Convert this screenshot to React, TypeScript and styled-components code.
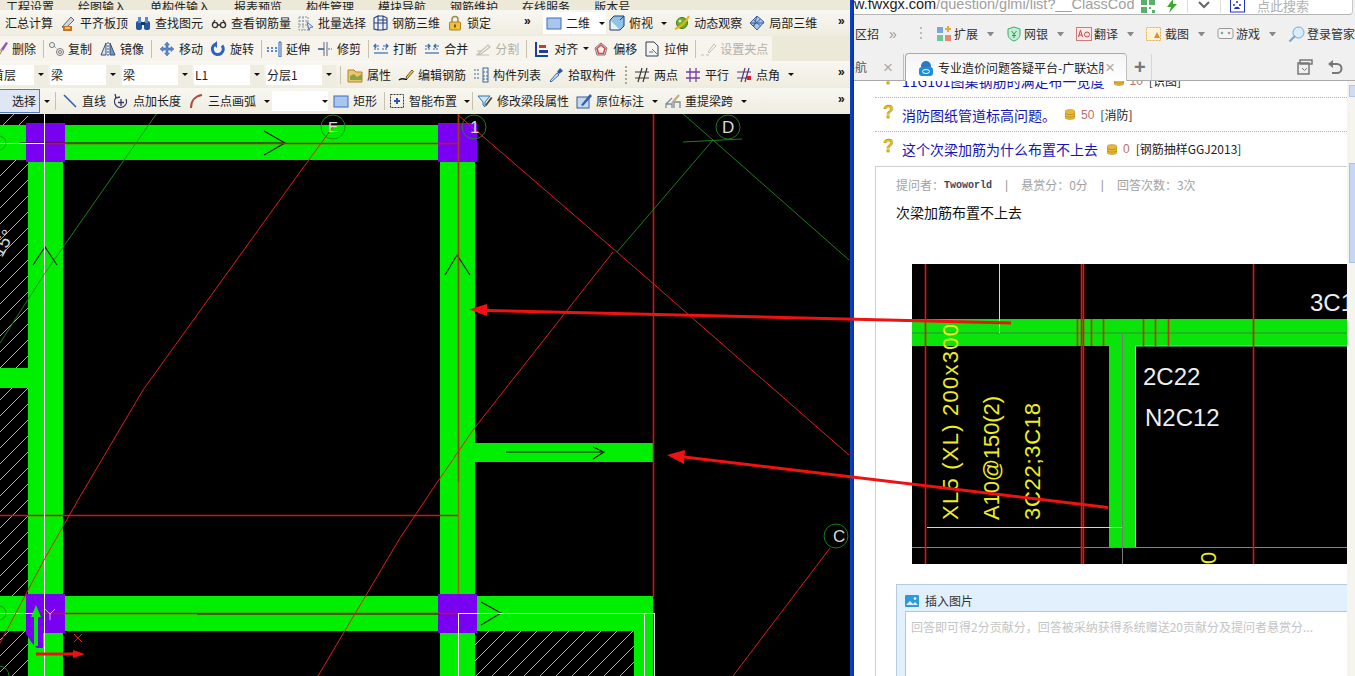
import React from "react";
import styled, { createGlobalStyle } from "styled-components";

const Global = createGlobalStyle`
  html, body { margin: 0; padding: 0; background: #000; overflow: hidden; }
  * { box-sizing: border-box; }
`;
const CJK = `"Noto Sans CJK SC", "Liberation Sans", sans-serif`;

const Page = styled.div`
  position: relative; display: flex; width: 1355px; height: 676px; overflow: hidden;
  font-family: ${CJK}; font-size: 12px; line-height: 1; background: #fff;
`;
const CadApp = styled.div`
  width: 850px; flex: none; display: flex; flex-direction: column; background: #000;
`;
const Rule = styled.div`
  width: 4px; flex: none; background: linear-gradient(to right, #0b46c8, #0a2fa8);
`;
const MenuSliver = styled.div`
  height: 10px; flex: none; display: flex; align-items: flex-end; gap: 24px; overflow: hidden;
  padding-left: 6px; background: #ece9d8; color: #222; white-space: nowrap;
  span { display: block; margin-bottom: -3px; }
`;
const ToolRow = styled.div<{ $h: number; $band?: number }>`
  height: ${p => p.$h}px; flex: none; display: flex; align-items: center; gap: 7px; overflow: hidden;
  background: ${p => p.$band
    ? `linear-gradient(to right, #f6f4ec ${p.$band}px, #ece9d8 ${p.$band}px)`
    : "linear-gradient(#f8f7f1, #efecdf)"};
  white-space: nowrap; color: #1c1c1c;
`;
const ToolItem = styled.div<{ $ml?: number; $muted?: boolean }>`
  display: flex; align-items: center; gap: 4px; flex: none;
  margin-left: ${p => p.$ml ?? 0}px;
  color: ${p => (p.$muted ? "#b3b1a6" : "#1c1c1c")};
  svg { flex: none; }
`;
const Caret = styled.i<{ $ml?: number }>`
  display: block; flex: none; width: 6px; height: 3px; margin: 0 .5px 0 ${p => (p.$ml ?? 0) + 0.5}px;
  border-left: 3px solid transparent; border-right: 3px solid transparent; border-top: 3px solid #111;
`;
const Sep = styled.i<{ $ml?: number }>`
  display: block; flex: none; width: 1px; height: 18px; background: #c5c2b0;
  margin: 0 -3px 0 ${p => p.$ml ?? 0}px;
`;
const More = styled.b<{ $ml?: string }>`
  margin-left: ${p => p.$ml ?? "auto"}; margin-right: ${p => (p.$ml ? 0 : 3)}px; align-self: flex-start; margin-top: 4px;
  font: bold 12px "Liberation Sans", sans-serif; letter-spacing: -1px; color: #111; width: 9px;
`;
const Grip = styled.i<{ $ml?: number }>`
  display: block; flex: none; width: 2px; height: 18px; margin-left: ${p => p.$ml ?? 0}px;
  background: repeating-linear-gradient(#a9a692 0 2px, transparent 2px 4px);
`;
const ViewGroup = styled.div`
  display: flex; align-items: center; gap: 4px; flex: none; width: 63px; height: 22px;
  margin-left: 3px; padding-left: 3px; background: #fff;
`;
const Combo = styled.div<{ $w: number; $ml?: number; $offset?: number }>`
  display: flex; align-items: center; flex: none; height: 20px; width: ${p => p.$w}px;
  margin-left: ${p => p.$ml ?? -5}px; background: #fff; overflow: hidden;
  span { flex: 1; min-width: 0; margin-left: ${p => p.$offset ?? 1}px; }
  em { flex: none; width: 14px; height: 100%; display: flex; align-items: center; justify-content: center; background: #efedE2; }
`;
const SelectButton = styled.div`
  flex: none; width: 40px; height: 24px; padding-left: 12px; display: flex; align-items: center;
  background: #dfe7f4; border: 1px solid #4d7dc0; border-left: 0;
`;
const Canvas = styled.svg`
  display: block; width: 850px; height: 562px; flex: none; background: #000;
`;
const CadLabel = styled.text<{ $fs?: number }>`
  font-family: "Liberation Sans", sans-serif; font-size: ${p => p.$fs ?? 17}px; fill: #d8d8d8;
`;

const Browser = styled.div`
  flex: 1; min-width: 0; display: flex; flex-direction: column; background: #f0f0f0;
`;
const AddressBar = styled.div`
  height: 15px; flex: none; display: flex; align-items: flex-end; background: #fff; overflow: hidden;
  border-bottom: 1px solid #b4b4b4; border-right: 1px solid #c8c8c8; border-radius: 0 0 4px 0;
  margin-right: 2px; padding-bottom: 1px; white-space: nowrap;
`;
const Url = styled.div`
  width: 285px; flex: none; font: 14.5px/18px "Liberation Sans", sans-serif; color: #a0a0a0; overflow: hidden;
  b { font-weight: normal; color: #222; }
`;
const AddressIcons = styled.div`
  display: flex; align-items: center; gap: 9px; margin-left: 2px; height: 14px;
`;
const VLine = styled.i`
  display: block; width: 1px; height: 14px; background: #ddd;
`;
const SearchHint = styled.div`
  color: #b0b0b0; font-size: 13px; line-height: 12px; width: 95px;
`;
const BookmarkBar = styled.div`
  height: 38px; flex: none; display: flex; align-items: center; padding-left: 1px; white-space: nowrap; overflow: hidden;
  color: #333;
`;
const Chevrons = styled.span`
  margin-left: 10px; width: 12px; color: #999; font: 14px "Liberation Sans", sans-serif; letter-spacing: -1px;
`;
const BarGrip = styled.i`
  display: block; width: 2px; height: 14px; margin-left: 21px; background: repeating-linear-gradient(#bbb 0 2px, transparent 2px 5px);
`;
const BarItem = styled.div<{ $ml?: number }>`
  display: flex; align-items: center; gap: 2px; flex: none; margin-left: ${p => p.$ml ?? 12}px;
`;
const BarCaret = styled.i`
  display: block; width: 7px; height: 4px; margin-left: 7px;
  border-left: 3.5px solid transparent; border-right: 3.5px solid transparent; border-top: 4px solid #888;
`;
const TabBar = styled.div`
  height: 28px; flex: none; display: flex; align-items: flex-end; border-bottom: 1px solid #a9a9a9; position: relative;
`;
const Tab = styled.div<{ $active?: boolean }>`
  height: ${p => (p.$active ? 28 : 26)}px; display: flex; align-items: center; overflow: hidden; flex: none; white-space: nowrap;
  width: ${p => (p.$active ? 222 : 50)}px; margin-left: ${p => (p.$active ? 1 : 0)}px;
  padding-left: ${p => (p.$active ? 12 : 0)}px;
  margin-bottom: ${p => (p.$active ? -1 : 0)}px;
  background: ${p => (p.$active ? "linear-gradient(#f4f4f4, #fff)" : "transparent")};
  border: ${p => (p.$active ? "1px solid #a9a9a9" : "0")};
  border-right: 1px solid #c0c0c0;
  border-bottom: 0; border-radius: ${p => (p.$active ? "4px 4px 0 0" : "0")};
  color: #222;
`;
const TabTitle = styled.div`
  width: 166px; flex: none; overflow: hidden; margin-left: 4px;
`;
const FadedTitle = styled.div`
  margin-left: -11px; width: 27px; flex: none; color: #555; overflow: hidden;
`;
const TabClose = styled.span`
  color: #aaa; font: 17px/1 "Liberation Sans", sans-serif; margin-left: 1px; flex: none;
`;
const SideClose = styled(TabClose)`
  margin-left: 13px;
`;
const Plus = styled.span`
  color: #777; font: bold 20px/1 "Liberation Sans", sans-serif; margin: 0 0 3px 7px; width: 17px; height: 20px; flex: none;
`;
const TabDivider = styled.i`
  display: block; width: 1px; height: 26px; background: #d6d6d6; flex: none;
`;
const TabTools = styled.div`
  margin: 0 12px 5px auto; display: flex; gap: 14px;
`;
const Content = styled.div`
  flex: 1; min-height: 0; display: flex; background: #fff;
`;
const Main = styled.div`
  flex: 1; min-width: 0; overflow: hidden;
`;
const QuestionRow = styled.div<{ $first?: boolean }>`
  height: 34px; flex: none; display: flex; align-items: center; margin-left: 21px; padding-left: 8px;
  margin-top: ${p => (p.$first ? -17 : 0)}px; border-bottom: 1px dotted #b5b5b5; white-space: nowrap;
`;
const PlainRow = styled(QuestionRow)`
  border-bottom: 0;
`;
const Mark = styled.span`
  width: 11px; flex: none; font: bold 18px/1 "Liberation Sans", sans-serif; color: #e6bd10; margin-right: 8px; margin-top: -6px;
  -webkit-text-stroke: .3px #9a7a00;
`;
const QuestionTitle = styled.span`
  font-size: 14px; color: #1414b4; margin-right: 9px;
`;
const Points = styled.span`
  font: 12px "Liberation Sans", sans-serif; color: #bb6f68; margin: 0 6px 0 6px;
`;
const Tag = styled.span`
  font-size: 12px; color: #222; letter-spacing: 0;
`;
const DetailBox = styled.div`
  margin-left: 21px; border-left: 1px solid #cfcfcf; border-top: 1px solid #cfcfcf; padding: 10px 0 0 20px; height: 520px;
`;
const Meta = styled.div`
  height: 16px; display: flex; align-items: center; color: #a2a2a2; white-space: nowrap;
`;
const Asker = styled.span`
  font: bold 10px "Liberation Mono", monospace; color: #3d4658;
`;
const MetaBar = styled.span`
  margin: 0 13px; color: #999; font: 12px "Liberation Sans", sans-serif;
`;
const Statement = styled.div`
  margin-top: 11px; font-size: 14px; line-height: 16px; color: #111;
`;
const DrawingImage = styled.svg`
  display: block; width: 435px; height: 300px; margin: 44px 0 20px 16px; background: #000;
`;
const ImgLabel = styled.text<{ $c: string; $fs: number }>`
  font-family: "Liberation Sans", sans-serif; font-size: ${p => p.$fs}px; fill: ${p => p.$c};
`;
const AnswerBox = styled.div`
  height: 92px; background: #e2effc; border: 1px solid #b4cbe2; border-right: 0; border-bottom: 0; padding-left: 8px;
`;
const AnswerHead = styled.div`
  height: 26px; display: flex; align-items: center; gap: 6px; color: #333; padding-top: 6px;
`;
const AnswerInput = styled.div`
  height: 70px; background: #fff; border: 1px solid #b4c6de; border-right: 0; padding: 9px 0 0 5px; color: #c4c4c4; white-space: nowrap;
`;
const ScrollTrack = styled.div`
  width: 8px; flex: none; background: #f5f4ee; display: flex; flex-direction: column; align-items: flex-end;
`;
const ScrollUp = styled.div`
  width: 6px; height: 12px; margin-top: 4px; background: #cfdcf4; border: 1px solid #b4c6e8; border-right: 0;
`;
const ScrollThumb = styled.div`
  width: 6px; height: 100px; margin-top: 66px; background: #c6d6f5; border: 1px solid #a9bfe8; border-right: 0;
`;
const Overlay = styled.svg`
  position: absolute; left: 0; top: 0; width: 1355px; height: 676px; pointer-events: none;
`;

const icons: Record<string, React.ReactNode> = {
  plate: <><path d="M2 12l9-10 3 3-9 9z" fill="#cfd6d8" stroke="#667"/><rect x="3" y="11" width="9" height="5" fill="#c6722a"/><path d="M5 13h5" stroke="#ffd24a" strokeWidth="2"/></>,
  binoculars: <><rect x="1" y="6" width="6" height="9" rx="2" fill="#24569c"/><rect x="9" y="6" width="6" height="9" rx="2" fill="#24569c"/><rect x="3" y="2" width="3" height="6" fill="#5b8ad0"/><rect x="10" y="2" width="3" height="6" fill="#5b8ad0"/><rect x="6" y="7" width="4" height="3" fill="#17345f"/></>,
  glasses: <g fill="none" stroke="#333" strokeWidth="1.3"><circle cx="4" cy="10" r="2.6"/><circle cx="12" cy="10" r="2.6"/><path d="M1.5 9L4 5M14.5 9L12 5M6.5 10h3"/></g>,
  batch: <g fill="none"><path d="M1 2h9v13H1zM1 6h9M1 10h9M5 2v13" stroke="#8c94a8" strokeDasharray="2 1"/><path d="M9 7l6 5-3 .5-1 3z" fill="#dfe9f7" stroke="#5577aa"/></g>,
  grid3d: <path d="M2 3l4-2v14l-4-1zM6 1h5l4 2v11l-4 1H6M11 1v14M2 8h13M6 5h9" fill="none" stroke="#24408c" strokeWidth="1.1"/>,
  lock: <><path d="M5 7V4.5a3 3 0 016 0V7" fill="none" stroke="#9a8a50" strokeWidth="1.5"/><rect x="2.5" y="7" width="11" height="8" rx="1" fill="#f0c040" stroke="#a98420"/><rect x="7" y="9.5" width="2" height="3" fill="#7a5a10"/></>,
  rect2d: <rect x="1" y="3" width="14" height="11" fill="#a9c6ef" stroke="#3a6cc0"/>,
  cube: <><path d="M1 5h10v10H1z" fill="#e8f2fb" stroke="#1d3c78"/><path d="M1 5l4-4h10v10l-4 4" fill="#8fc4e6" stroke="#1d3c78"/><path d="M11 5l4-4" stroke="#1d3c78"/></>,
  orbit: <><circle cx="8" cy="8" r="5.5" fill="#6fae2c" stroke="#3d7a14"/><path d="M1 14C6 12 12 7 15 1" stroke="#e7b41a" strokeWidth="2" fill="none"/><circle cx="6" cy="6" r="1.6" fill="#d7ef90"/></>,
  local3d: <g fill="#a8c4ea" stroke="#3c5f98"><path d="M1 8l7-7 7 6-7 8z"/><path d="M4.5 4.5l7 6.5M8 1l-3.5 11M11.5 4L4 11M1 8h14" fill="none"/></g>,
  erase: <><path d="M3 14l4-6 3 2-4 6z" fill="#f1e3a0" stroke="#8d8a50"/><path d="M9 8l5-7 2 1-5 8z" fill="#8f55c5"/></>,
  copy: <g fill="none" stroke="#777"><circle cx="4" cy="4" r="2.5"/><circle cx="12" cy="11" r="3.5"/><circle cx="12" cy="11" r="1.5"/><path d="M6 5l3 3" stroke="#4a78bb" strokeDasharray="1 1"/></g>,
  mirror: <g stroke="#35507c"><path d="M1 14L6 2v12z" fill="#d8e2f0"/><path d="M15 14L10 2v12z" fill="#7898c8"/><path d="M8 1v14" strokeDasharray="2 1"/></g>,
  move: <path d="M8 1l2.5 3H9v3h3V5.5L15 8l-3 2.5V9H9v3h1.5L8 15l-2.5-3H7V9H4v1.5L1 8l3-2.5V7h3V4H5.500z" fill="#5b88c8" stroke="#2f5c9c" strokeWidth=".5"/>,
  rotate: <><path d="M12 4.500A5.500 5.500 0 1 1 5 3.300" fill="none" stroke="#2f62c0" strokeWidth="3"/><path d="M7 0v7L3 3.500z" fill="#2f62c0"/></>,
  extend: <g fill="none" stroke="#2d62b8"><path d="M1 7h2M5 7h2M9 7h2M1 10h2M5 10h2M9 10h2" strokeWidth="1.4"/><path d="M13 1h2v15h-2z"/></g>,
  trim: <g fill="none" stroke="#5a6a8a"><path d="M1 8h6" strokeWidth="1.500" stroke="#35507c"/><path d="M7 1v14M10 1v14"/><path d="M11 8h4" strokeDasharray="2 1"/></g>,
  breakIt: <g fill="none" stroke="#3468b0" strokeWidth="1.2"><path d="M1 8h6M9 8h6" strokeDasharray="2 1"/><path d="M1 5h5M3 3L1 5l2 2M15 5h-5M13 3l2 2-2 2"/><path d="M1 12h14"/></g>,
  merge: <g fill="none" stroke="#3468b0" strokeWidth="1.2"><path d="M1 8h6M9 8h6" strokeDasharray="2 1"/><path d="M1 5h5M4 3l2 2-2 2M15 5h-5M12 3l-2 2 2 2"/><path d="M1 12h14"/></g>,
  split: <g fill="none" stroke="#c3c1b6" strokeWidth="1.200"><path d="M1 14h13M3 13L13 4l2 2-9 7z"/><path d="M2 10h4"/></g>,
  align: <><path d="M2 1v14h12" fill="none" stroke="#1b3f9c" strokeWidth="2"/><rect x="5" y="4" width="7" height="3" fill="#c8373c"/><rect x="5" y="9" width="9" height="3" fill="#1b3f9c"/></>,
  offset: <g fill="none"><path d="M8 2l6 5-2 7H4L2 7z" stroke="#777"/><path d="M8 4l4 3.500-1.500 5h-5L4 7.500z" stroke="#d8484c" strokeWidth="1.600"/></g>,
  stretch: <g fill="none" stroke="#333c58"><path d="M2 1h8l4 4v10H2z"/><path d="M8 8l5 5M5 11h4" stroke="#4572c0"/></g>,
  grip: <g fill="none" stroke="#c3c1b6"><path d="M1 14h3M6 14h3"/><path d="M8 11l6-8 2 2-7 7z"/></g>,
  attr: <><path d="M1 3h6l2 2h6v10H1z" fill="#eec56a" stroke="#b28528"/><path d="M3 9l4-2 3 3 5-3v6H3z" fill="#8aa24a"/></>,
  editbar: <g fill="none"><path d="M1 13c3-3 6 0 8-1" stroke="#111" strokeWidth="1.500"/><path d="M8 10l6-7 1.500 1.500-6 7z" fill="#e7c55a" stroke="#7a5a10"/></g>,
  list: <g fill="none" stroke="#3f6a96"><rect x="10" y="1" width="5" height="14"/><path d="M10 5h5M10 9h5M10 12h5M1 3h6M1 7h6M1 11h6" strokeDasharray="2 1"/></g>,
  dropper: <><path d="M2 14l7-8 2 2-8 7z" fill="#cfe0f4" stroke="#3c6aa8"/><path d="M9 5l3-4 3 3-4 3z" fill="#2a58a6"/></>,
  twoPoint: <path d="M1 5h14M1 11h14M4 15L8 1M9 15l4-14" fill="none" stroke="#3a3a3a" strokeWidth="1.200"/>,
  parallel: <path d="M1 5h14M1 11h14M5 1v14M11 1v14" fill="none" stroke="#7a3aa8" strokeWidth="1.300"/>,
  angle: <><path d="M1 5h14M1 11h14M5 15l4-14M9 15l4-14" fill="none" stroke="#5a3a78" strokeWidth="1.200"/><rect x="11" y="9" width="4" height="4" fill="#e02020"/></>,
  lineTool: <path d="M2 2l12 12" stroke="#2f62b0" strokeWidth="1.600" fill="none"/>,
  pointLen: <g fill="none" stroke="#333c68" strokeWidth="1.300"><path d="M13 6a6 6 0 11-10-1.500M2 1l1 4 4-1"/><path d="M8 6v7M5 9.500h6"/></g>,
  arc: <path d="M3 15C3 8 7 3 14 2" fill="none" stroke="#b04a3a" strokeWidth="2"/>,
  smart: <g fill="none" stroke="#333"><rect x="1.500" y="1.500" width="13" height="13" strokeDasharray="2 1"/><path d="M5 8h6M8 5v6" stroke="#2a58a6" strokeWidth="2"/></g>,
  modify: <g fill="none"><path d="M1 3h12L8 9v5L6 12V9z" fill="#cfe6f5" stroke="#2a76b0"/><path d="M8 12l6-8 1.500 1-6 8z" fill="#5a4a20"/></g>,
  mark: <><rect x="1" y="4" width="12" height="11" fill="#c8d8ef" stroke="#33609e"/><path d="M5 12L14 1l2 2-9 10z" fill="#2f62b0"/></>,
  repick: <g fill="none" stroke="#7c8a9a" strokeWidth="1.300"><path d="M1 15v-4h6v4M9 15v-6h6v6M1 11l6-6"/><path d="M7 10l7-8" stroke="#b8b080" strokeWidth="2"/></g>,
};

function Ico({ n, s = 16 }: { n: string; s?: number }) {
  return <svg width={s} height={s} viewBox="0 0 16 16">{icons[n]}</svg>;
}
function Tool({ icon, label, ml, muted }: { icon: string; label: string; ml?: number; muted?: boolean }) {
  return <ToolItem $ml={ml} $muted={muted}><Ico n={icon} />{label}</ToolItem>;
}
function Box({ w, ml, off, text }: { w: number; ml?: number; off?: number; text: string }) {
  return <Combo $w={w} $ml={ml} $offset={off}><span>{text}</span><em><Caret /></em></Combo>;
}

function CadDrawing() {
  const G = "#00ee00";
  const P = "#7a00f2";
  const R = "#e01c1c";
  const D = "#d01414";
  return (
    <Canvas viewBox="0 114 850 562">
      <defs>
        <pattern id="hatch" patternUnits="userSpaceOnUse" width="16" height="16">
          <path d="M0 16L16 0" stroke="#d8d8d8" strokeWidth=".8" />
        </pattern>
      </defs>
      <rect x="0" y="114" width="28" height="254" fill="url(#hatch)" />
      <rect x="0" y="388" width="28" height="208" fill="url(#hatch)" />
      <rect x="0" y="631" width="28" height="45" fill="url(#hatch)" />
      <rect x="475" y="631" width="159" height="45" fill="url(#hatch)" />
      <g fill={G}>
        <rect x="0" y="125" width="440" height="35" />
        <rect x="28" y="125" width="35" height="551" />
        <rect x="440" y="125" width="35" height="551" />
        <rect x="0" y="368" width="28" height="20" />
        <rect x="475" y="443" width="178" height="19" />
        <rect x="0" y="596" width="653" height="35" />
        <rect x="634" y="631" width="19" height="45" />
      </g>
      <g fill={P}>
        <rect x="26" y="123" width="39" height="39" />
        <rect x="438" y="123" width="39" height="39" />
        <path d="M26 594h39v39H43v15h-6l-5-5-6-9z" />
        <rect x="438" y="594" width="39" height="39" />
      </g>
      <g fill="none" stroke="#111" strokeWidth="1.100">
        <path d="M20 143H285M264 131l21 12-21 12" />
        <path d="M33 265l12-18 12 18" />
        <path d="M445 275l12-20 13 20" />
        <path d="M506 452H604M593 447l11 5-11 7" />
        <path d="M481 602l20 11-20 12" />
        <path d="M197 614H440" />
      </g>
      <g fill="none" stroke={D} strokeWidth="1.600">
        <path d="M44 143.500H458" />
        <path d="M0 515.500H458" />
        <path d="M653.500 114V597" />
        <path d="M44 613.500H458" />
      </g>
      <path d="M458.500 114V482" stroke="#a04010" strokeWidth="1.600" />
      <path d="M458.500 482V594" stroke="#a86010" strokeWidth="1.400" />
      <path d="M44.500 114V676M458.500 613V676M458 613.500H655M644.500 613V676M654.500 613V676" stroke="#fff" strokeWidth="1" fill="none" />
      <path d="M0 143.500H44M0 613.500H33" stroke="#fff" strokeWidth="1" />
      <g fill="none" stroke={R} strokeWidth="1">
        <path d="M333 127L300 172L143 390L78 500L44 560L0 643" />
        <path d="M613 252L473 430L432 490L400 538L318 676" />
        <path d="M458 115L617 252L849 455" />
        <path d="M830 548L733 676" />
      </g>
      <g fill="none" stroke="#1f8a1f" strokeWidth=".9">
        <path d="M157 113L45 273L0 343" />
        <path d="M617 252L713 140L849 260M682 113L713 140" />
        <path d="M683 142L742 139" />
        <circle cx="333" cy="127" r="12" />
        <circle cx="474" cy="127" r="12" />
        <circle cx="728" cy="127" r="12" />
        <circle cx="836" cy="536" r="12" />
        <circle cx="-1" cy="143" r="7" />
        <circle cx="-1" cy="613" r="7" />
        <circle cx="-1" cy="676" r="10" />
      </g>
      <CadLabel x="328" y="132" $fs={15}>E</CadLabel>
      <CadLabel x="470" y="133">1</CadLabel>
      <CadLabel x="722" y="133">D</CadLabel>
      <CadLabel x="833" y="542">C</CadLabel>
      <CadLabel x="0" y="0" $fs={18} transform="translate(2 258) rotate(-62)">15°</CadLabel>
      <path d="M36 612V646" stroke="#00ee00" strokeWidth="4" />
      <path d="M36 605l-5 12h10z" fill="#00ee00" />
      <path d="M36 654H76" stroke="#ee1010" strokeWidth="3" />
      <path d="M85 654l-12-4v8z" fill="#ee1010" />
      <path d="M45 609l5 5 5-5M50 614v6" stroke="#ddd" strokeWidth=".8" fill="none" />
      <path d="M74 634l8 8M82 634l-8 8" stroke={R} strokeWidth="1" />
    </Canvas>
  );
}

function ImageDrawing() {
  return (
    <DrawingImage viewBox="912 264 435 300">
      <rect x="912" y="319" width="435" height="27" fill="#0ae40a" />
      <rect x="1109" y="346" width="27" height="201" fill="#0ae40a" />
      <path d="M1136 346H1347M1135.500 346V547" stroke="#50f0a0" strokeWidth="1" fill="none" />
      <path d="M912 547.500H1347" stroke="#20c820" strokeWidth="1" />
      <path d="M912 333H1347" stroke="#3a8a3a" strokeWidth="1" />
      <path d="M925.500 264V564M1081.500 264V564M1083.500 264V564M1253.500 264V564" stroke="#dc1414" strokeWidth="1.600" />
      <path d="M1077.500 319V346M1091.500 319V346M1103.500 319V346M1143.500 319V346M1155.500 319V346M1168.500 319V346" stroke="#c83010" strokeWidth="1.600" />
      <path d="M1122.500 333V564" stroke="#777" strokeWidth="1" />
      <path d="M999.500 264V333M927 527.500H1122" stroke="#e8e840" strokeWidth="1" />
      <ImgLabel $c="#eee" $fs={24} x="1310" y="311">3C1</ImgLabel>
      <ImgLabel $c="#eee" $fs={24} x="1143" y="385">2C22</ImgLabel>
      <ImgLabel $c="#eee" $fs={24} x="1145" y="426">N2C12</ImgLabel>
      <ImgLabel $c="#eeee20" $fs={22} transform="translate(958 520) rotate(-90)" x="0" y="0" textLength="196" lengthAdjust="spacing">XL5 (XL)  200x300</ImgLabel>
      <ImgLabel $c="#eeee20" $fs={22} transform="translate(999 520) rotate(-90)" x="0" y="0" textLength="124">A10@150(2)</ImgLabel>
      <ImgLabel $c="#eeee20" $fs={22} transform="translate(1040 520) rotate(-90)" x="0" y="0" textLength="117">3C22;3C18</ImgLabel>
      <ImgLabel $c="#eeee20" $fs={22} transform="translate(1216 564) rotate(-90)" x="0" y="0">0</ImgLabel>
    </DrawingImage>
  );
}

const Coin = () => (
  <svg width="10" height="11" viewBox="0 0 10 11">
    <path d="M0 2.500C0 0 10 0 10 2.500V8.500C10 11 0 11 0 8.500z" fill="#e8b838" stroke="#b8861a" strokeWidth=".6" />
    <path d="M0 4.500C3 6 7 6 10 4.500M0 7C3 8.500 7 8.500 10 7" fill="none" stroke="#a87a10" strokeWidth=".6" />
  </svg>
);

export default function App() {
  return (
    <Page>
      <Global />
      <CadApp>
        <MenuSliver>
          <span>工程设置</span><span>绘图输入</span><span>单构件输入</span><span>报表预览</span><span>构件管理</span><span>模块导航</span><span>钢筋维护</span><span>在线服务</span><span>版本号</span>
        </MenuSliver>
        <ToolRow $h={26}>
          <ToolItem $ml={5}>汇总计算</ToolItem>
          <Tool icon="plate" label="平齐板顶" />
          <Tool icon="binoculars" label="查找图元" />
          <Tool icon="glasses" label="查看钢筋量" ml={1} />
          <Tool icon="batch" label="批量选择" />
          <Tool icon="grid3d" label="钢筋三维" ml={-1} />
          <Tool icon="lock" label="锁定" />
          <More $ml="26px">»</More>
          <ViewGroup><Ico n="rect2d" />二维<Caret $ml={4} /></ViewGroup>
          <Tool icon="cube" label="俯视" ml={-4} />
          <Caret />
          <Tool icon="orbit" label="动态观察" />
          <Tool icon="local3d" label="局部三维" />
          <More>»</More>
        </ToolRow>
        <ToolRow $h={25} $band={772}>
          <ToolItem $ml={-8}><Ico n="erase" />删除</ToolItem>
          <Sep />
          <Tool icon="copy" label="复制" />
          <Tool icon="mirror" label="镜像" ml={1} />
          <Sep />
          <Tool icon="move" label="移动" ml={3} />
          <Tool icon="rotate" label="旋转" />
          <Sep />
          <Tool icon="extend" label="延伸" />
          <Tool icon="trim" label="修剪" />
          <Sep />
          <Tool icon="breakIt" label="打断" />
          <Tool icon="merge" label="合并" />
          <Tool icon="split" label="分割" muted />
          <Sep />
          <Tool icon="align" label="对齐" ml={3} />
          <Caret $ml={-3} />
          <Tool icon="offset" label="偏移" ml={-3} />
          <Tool icon="stretch" label="拉伸" />
          <Sep />
          <Tool icon="grip" label="设置夹点" muted />
        </ToolRow>
        <ToolRow $h={27}>
          <Box w={48} ml={0} off={-8} text="首层" />
          <Box w={70} text="梁" />
          <Box w={70} text="梁" />
          <Box w={70} text="L1" />
          <Box w={70} text="分层1" />
          <Sep $ml={-3} />
          <Tool icon="attr" label="属性" ml={2} />
          <Tool icon="editbar" label="编辑钢筋" />
          <Tool icon="list" label="构件列表" />
          <Tool icon="dropper" label="拾取构件" />
          <Grip $ml={2} />
          <Tool icon="twoPoint" label="两点" />
          <Tool icon="parallel" label="平行" />
          <Tool icon="angle" label="点角" />
          <Caret />
          <More>»</More>
        </ToolRow>
        <ToolRow $h={26}>
          <SelectButton>选择</SelectButton>
          <Caret $ml={-4} />
          <Sep $ml={-2} />
          <Tool icon="lineTool" label="直线" ml={2} />
          <Tool icon="pointLen" label="点加长度" />
          <Tool icon="arc" label="三点画弧" />
          <Caret />
          <Combo $w={56}><span /><Caret /></Combo>
          <Tool icon="rect2d" label="矩形" ml={-2} />
          <Sep />
          <Tool icon="smart" label="智能布置" />
          <Caret $ml={-1} />
          <Sep $ml={-5} />
          <Tool icon="modify" label="修改梁段属性" />
          <Tool icon="mark" label="原位标注" />
          <Caret />
          <Tool icon="repick" label="重提梁跨" />
          <Caret />
          <More>»</More>
        </ToolRow>
        <CadDrawing />
      </CadApp>
      <Rule />
      <Browser>
        <AddressBar>
          <Url><b>w.fwxgx.com</b>/question/glmi/list?__ClassCod</Url>
          <AddressIcons>
            <svg width="14" height="14" viewBox="0 0 14 14"><path d="M0 0h6v6H0zM8 0h6v6H8zM0 8h6v6H0zM8 8h2v2H8zM11 11h3v3h-3z" fill="#5cae6c" /></svg>
            <svg width="14" height="14" viewBox="0 0 14 14"><path d="M9 0L3 8h4l-2 6 8-9H9z" fill="#3ea82e" /></svg>
            <VLine />
            <svg width="14" height="10" viewBox="0 0 14 10"><path d="M2 1l5 5 5-5" fill="none" stroke="#666" strokeWidth="2" /></svg>
            <VLine />
            <svg width="18" height="14" viewBox="0 0 18 14"><rect x=".5" y="0" width="14" height="13" fill="#fff" stroke="#2030c0" /><path d="M3 6a1 1 0 012 0 1 1 0 01-2 0M6 3a1 1 0 012 0 1 1 0 01-2 0M9 6a1 1 0 012 0 1 1 0 01-2 0M4 10c1-3 5-3 6 0z" fill="#2030c0" /></svg>
            <SearchHint>点此搜索</SearchHint>
            <svg width="14" height="14" viewBox="0 0 14 14"><circle cx="6" cy="5" r="4.500" fill="none" stroke="#777" strokeWidth="1.500" /><path d="M9 8l4 4" stroke="#777" strokeWidth="1.500" /></svg>
          </AddressIcons>
        </AddressBar>
        <BookmarkBar>
          区招
          <Chevrons>»</Chevrons>
          <BarGrip />
          <BarItem $ml={14}>
            <svg width="16" height="16" viewBox="0 0 16 16"><rect x="1" y="1" width="6" height="6" fill="#7aa6e0" /><rect x="1" y="9" width="6" height="6" fill="#72c49a" /><rect x="9" y="9" width="6" height="6" fill="#e8877a" /><path d="M12 0v6M9 3h6" stroke="#e8a838" strokeWidth="2" /></svg>
            扩展<BarCaret />
          </BarItem>
          <BarItem>
            <svg width="16" height="16" viewBox="0 0 16 16"><path d="M8 1l6 2v5c0 4-3 6-6 7-3-1-6-3-6-7V3z" fill="#c4eed4" stroke="#3aae70" /><path d="M5.500 5L8 8l2.500-3M8 8v4M6 9.500h4" fill="none" stroke="#2a9a60" /></svg>
            网银<BarCaret />
          </BarItem>
          <BarItem>
            <svg width="16" height="16" viewBox="0 0 16 16"><rect x=".5" y="1.500" width="15" height="13" fill="#fbe8e8" stroke="#d07a7a" /><path d="M2.500 11l2-7 2 7M3.200 9h2.800" fill="none" stroke="#c84848" strokeWidth="1" /><circle cx="11" cy="8.500" r="2.500" fill="none" stroke="#c84848" /></svg>
            翻译<BarCaret />
          </BarItem>
          <BarItem $ml={11}>
            <svg width="18" height="16" viewBox="0 0 18 16"><rect x="1.500" y="1.500" width="14" height="13" fill="#fdf4d8" stroke="#e0b050" strokeDasharray="2 1" /><path d="M9 12l3-6 3 6z" fill="#e88a28" /></svg>
            截图<BarCaret />
          </BarItem>
          <BarItem $ml={12}>
            <svg width="17" height="16" viewBox="0 0 17 16"><rect x="1" y="2.500" width="15" height="10" rx="2" fill="#f4f4f4" stroke="#999" /><circle cx="5" cy="7" r="1.300" fill="#7aa" /><circle cx="12" cy="7" r="1.300" fill="#c88" /></svg>
            游戏<BarCaret />
          </BarItem>
          <BarItem $ml={12}>
            <svg width="17" height="17" viewBox="0 0 17 17"><circle cx="10.500" cy="6.500" r="5.500" fill="#d8ecfb" stroke="#6aa8d8" /><path d="M7 10L1.500 15.500" stroke="#6aa8d8" strokeWidth="2" /></svg>
            登录管家
          </BarItem>
        </BookmarkBar>
        <TabBar>
          <Tab>
            <FadedTitle>导航</FadedTitle>
            <SideClose>×</SideClose>
          </Tab>
          <Tab $active>
            <svg width="16" height="18" viewBox="0 0 16 18"><path d="M3 7a5 5 0 0110 0v1H3z" fill="#2e78c8" /><rect x="1" y="8" width="14" height="9" rx="3" fill="#1a90d8" /><ellipse cx="8" cy="12.500" rx="3.500" ry="2" fill="none" stroke="#fff" /></svg>
            <TabTitle>专业造价问题答疑平台-广联达服务新干线</TabTitle>
            <TabClose>×</TabClose>
          </Tab>
          <Plus>+</Plus>
          <TabDivider />
          <TabTools>
            <svg width="16" height="16" viewBox="0 0 16 16"><path d="M3 1h12v4H3zM1 4h11v11H1z" fill="#f0f0f0" stroke="#777" strokeWidth="1.500" /><path d="M5 9l2.500 2.500L10 9" fill="none" stroke="#777" /></svg>
            <svg width="16" height="16" viewBox="0 0 16 16"><path d="M4 5h6a4 4 0 010 9H5" fill="none" stroke="#777" strokeWidth="2" /><path d="M6 1L1 5l5 4z" fill="#777" /></svg>
          </TabTools>
        </TabBar>
        <Content>
          <Main>
            <QuestionRow $first>
              <Mark>?</Mark>
              <QuestionTitle>11G101图集钢筋的满足布一览度</QuestionTitle>
              <Coin />
              <Points>10</Points>
              <Tag>[识图]</Tag>
            </QuestionRow>
            <QuestionRow>
              <Mark>?</Mark>
              <QuestionTitle>消防图纸管道标高问题。</QuestionTitle>
              <Coin />
              <Points>50</Points>
              <Tag>[消防]</Tag>
            </QuestionRow>
            <PlainRow>
              <Mark>?</Mark>
              <QuestionTitle>这个次梁加筋为什么布置不上去</QuestionTitle>
              <Coin />
              <Points>0</Points>
              <Tag>[钢筋抽样GGJ2013]</Tag>
            </PlainRow>
            <DetailBox>
              <Meta>
                提问者：<Asker>Twoworld</Asker>
                <MetaBar>|</MetaBar>悬赏分：0分
                <MetaBar>|</MetaBar>回答次数：3次
              </Meta>
              <Statement>次梁加筋布置不上去</Statement>
              <ImageDrawing />
              <AnswerBox>
                <AnswerHead>
                  <svg width="14" height="12" viewBox="0 0 14 12"><rect width="14" height="12" rx="1" fill="#2f9ad8" /><path d="M1 10l4-4 3 3 2-2 3 3z" fill="#d8f0fb" /><circle cx="10" cy="3.500" r="1.300" fill="#fff" /></svg>
                  插入图片
                </AnswerHead>
                <AnswerInput>回答即可得2分贡献分，回答被采纳获得系统赠送20贡献分及提问者悬赏分...</AnswerInput>
              </AnswerBox>
            </DetailBox>
          </Main>
          <ScrollTrack>
            <ScrollUp />
            <ScrollThumb />
          </ScrollTrack>
        </Content>
      </Browser>
      <Overlay viewBox="0 0 1355 676">
        <g fill="#ee1212">
          <path d="M1011 323L486 310.500" stroke="#ee1212" strokeWidth="3" />
          <path d="M469 309.500L487 304L487 316z" />
          <path d="M1108 507.500L684 457" stroke="#ee1212" strokeWidth="3" />
          <path d="M667 455L685 450L684 464z" />
        </g>
      </Overlay>
    </Page>
  );
}
